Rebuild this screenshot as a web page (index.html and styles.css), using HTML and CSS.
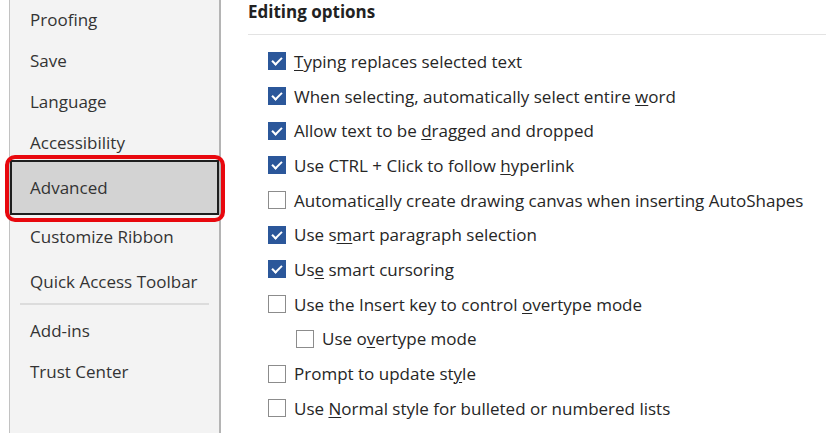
FILE: index.html
```html
<!DOCTYPE html>
<html lang="en">
<head>
<meta charset="utf-8">
<title>Word Options - Advanced</title>
<link rel="stylesheet" href="styles.css">
</head>
<body>
<div class="page">
  <nav class="sidebar">
    <div class="nav-item first">Proofing</div>
    <div class="nav-item">Save</div>
    <div class="nav-item">Language</div>
    <div class="nav-item">Accessibility</div>
    <div class="nav-item active">Advanced</div>
    <div class="nav-item after-active">Customize Ribbon</div>
    <div class="nav-item qat">Quick Access Toolbar</div>
    <div class="nav-sep"></div>
    <div class="nav-item addins">Add-ins</div>
    <div class="nav-item">Trust Center</div>
  </nav>
  <main class="content">
    <h2 class="section-title">Editing options</h2>
    <div class="section-rule"></div>
    <div class="options">
      <label class="opt"><span class="cb on"></span><span><u>T</u>yping replaces selected text</span></label>
      <label class="opt"><span class="cb on"></span><span>When selecting, automatically select entire <u>w</u>ord</span></label>
      <label class="opt"><span class="cb on"></span><span>Allow text to be <u>d</u>ragged and dropped</span></label>
      <label class="opt"><span class="cb on"></span><span>Use CTRL + Click to follow <u>h</u>yperlink</span></label>
      <label class="opt"><span class="cb"></span><span>Automatic<u>a</u>lly create drawing canvas when inserting AutoShapes</span></label>
      <label class="opt"><span class="cb on"></span><span>Use s<u>m</u>art paragraph selection</span></label>
      <label class="opt"><span class="cb on"></span><span>Us<u>e</u> smart cursoring</span></label>
      <label class="opt"><span class="cb"></span><span>Use the Insert key to control <u>o</u>vertype mode</span></label>
      <label class="opt indent"><span class="cb"></span><span>Use o<u>v</u>ertype mode</span></label>
      <label class="opt"><span class="cb"></span><span>Prompt to update st<u>y</u>le</span></label>
      <label class="opt"><span class="cb"></span><span>Use <u>N</u>ormal style for bulleted or numbered lists</span></label>
    </div>
  </main>
</div>
</body>
</html>
```
FILE: styles.css
```css
html, body {
  margin: 0;
  padding: 0;
  background: #ffffff;
  height: 100%;
  overflow: hidden;
}
body {
  font-family: "Open Sans", "Noto Sans", "Liberation Sans", sans-serif;
  color: #262626;
}
.page {
  display: flex;
  height: 433px;
  padding-left: 9px;
}
.sidebar {
  width: 209px;
  flex: none;
  background: #f3f3f3;
  border-left: 1px solid #c2c2c2;
  border-right: 2px solid #b4b4b4;
  display: flex;
  flex-direction: column;
  font-size: 17px;
  color: #333333;
}
.nav-item {
  height: 41px;
  line-height: 41px;
  padding-left: 20px;
  white-space: nowrap;
  flex: none;
}
.nav-item.first { margin-top: -1px; }
.nav-item.active {
  position: relative;
  height: 51px;
  line-height: 51px;
  margin-top: -3px;
  padding-left: 18px;
  background: #d3d3d3;
  border: 2px solid #1e1e1e;
}
.nav-item.active::after {
  content: "";
  position: absolute;
  left: -7px;
  right: -8px;
  top: -7px;
  bottom: -9px;
  border: 4px solid #e8080e;
  border-radius: 10px;
}
.nav-item.after-active { margin-top: 1px; }
.nav-item.qat { margin-top: 4px; }
.nav-sep {
  height: 2px;
  margin: 1px 10px 0 10px;
  background: #dcdcdc;
  flex: none;
}
.nav-item.addins { margin-top: 5px; }

.content {
  flex: 1;
  padding-left: 27px;
  min-width: 0;
}
.section-title {
  margin: 0;
  height: 24px;
  line-height: 24px;
  font-size: 17px;
  font-weight: 700;
  color: #222222;
}
.section-rule {
  height: 1px;
  background: #e3e3e3;
  margin-top: 10px;
}
.options {
  display: flex;
  flex-direction: column;
  margin-top: 9px;
}
.opt {
  height: 34.7px;
  display: flex;
  align-items: center;
  gap: 8px;
  padding-left: 20px;
  font-size: 17px;
  white-space: nowrap;
}
.opt.indent { padding-left: 48px; }
.opt u {
  text-decoration-thickness: 1px;
  text-underline-offset: 2px;
}
.cb {
  width: 16px;
  height: 16px;
  flex: none;
  border: 1px solid #8c8c8c;
  background: #ffffff;
  position: relative;
}
.cb.on {
  background: #2b579a;
  border-color: #2b579a;
}
.cb.on::after {
  content: "";
  position: absolute;
  left: 5px;
  top: 2px;
  width: 4px;
  height: 8px;
  border-right: 2px solid #ffffff;
  border-bottom: 2px solid #ffffff;
  transform: rotate(45deg);
}
```
